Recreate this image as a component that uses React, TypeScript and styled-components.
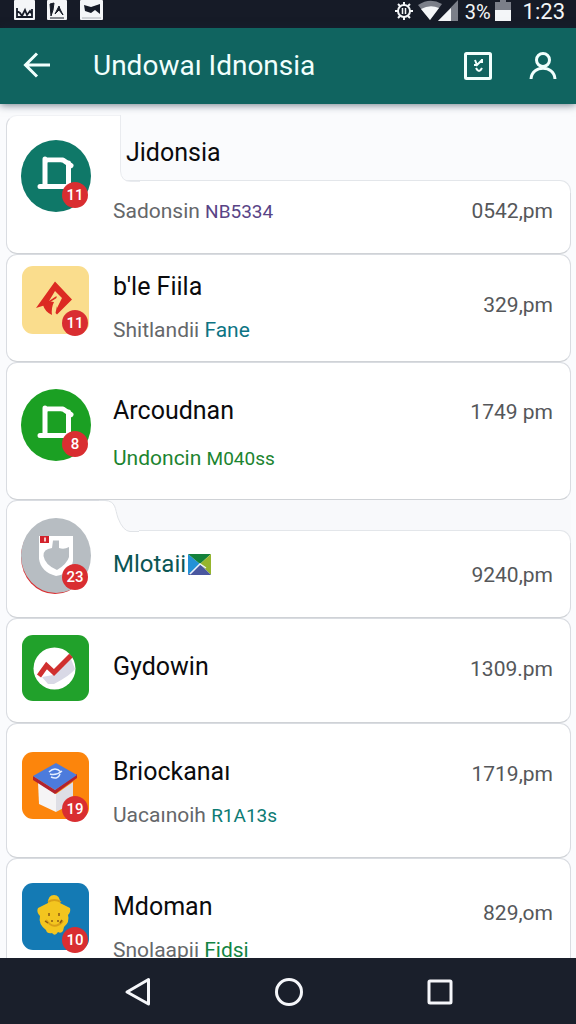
import React from "react";
import styled, { createGlobalStyle, css } from "styled-components";

const GlobalStyle = createGlobalStyle`
  * { box-sizing: border-box; }
  body {
    margin: 0;
    background: #fafbfd;
    font-family: Roboto, "Liberation Sans", sans-serif;
    color: #0b0b0d;
  }
  button { border: 0; padding: 0; background: none; color: inherit; font: inherit; cursor: pointer; }
  svg { display: block; }
`;

const Screen = styled.div`
  display: flex;
  flex-direction: column;
  height: 100vh;
`;

const StatusBar = styled.div`
  flex: none;
  display: flex;
  align-items: flex-start;
  justify-content: space-between;
  height: 28px;
  padding: 0 11px 0 14px;
  background: #161b27;
  color: #f4f6f8;
`;

const Notices = styled.div`
  display: flex;
  gap: 12px;
`;

const Signals = styled.div`
  display: flex;
  font-size: 22px;
  line-height: 24px;
`;

const Charge = styled.span`
  margin-left: 6px;
  font-size: 20px;
`;

const Clock = styled.time`
  margin-left: 10px;
`;

const AppBar = styled.header`
  position: relative;
  flex: none;
  display: flex;
  align-items: center;
  height: 76px;
  padding: 0 16px 0 20px;
  background: #106460;
  color: #f1fffd;
  box-shadow: 0 1px 8px rgba(20, 40, 60, 0.6);
`;

const BarButton = styled.button`
  display: grid;
  place-items: center;
  width: 34px;
  height: 40px;
`;

const BarTitle = styled.h1`
  flex: 1;
  margin: 0 0 0 39px;
  font-size: 28px;
  line-height: 36px;
  font-weight: 400;
`;

const BarActions = styled.div`
  display: flex;
  gap: 31px;
`;

const List = styled.ul`
  flex: 1;
  min-height: 0;
  overflow-y: auto;
  scrollbar-width: none;
  margin: 0;
  padding: 11px 5px 0 6px;
  list-style: none;
`;

type Notch = "square" | "curved";

const Row = styled.li<{ $height: number; $notch?: Notch }>`
  position: relative;
  display: flex;
  align-items: flex-start;
  min-height: ${(p) => p.$height}px;
  padding: 0 17px 0 14px;
  background: #fff;
  border: 1px solid #d9dce1;
  border-bottom-color: #cfd2d6;
  border-radius: 11px;
  ${(p) =>
    p.$notch === "square" &&
    css`
      border-top-color: #f1f2f5;
    `}
`;

const notchDepth = { square: 66, curved: 31 };

const NotchArea = styled.div<{ $kind: Notch }>`
  position: absolute;
  top: -1px;
  right: -1px;
  left: ${(p) => (p.$kind === "square" ? 113 : 120)}px;
  height: ${(p) => notchDepth[p.$kind] + 12}px;
  background: ${(p) => (p.$kind === "square" ? "#fafbfd" : "#f8f9fb")};

  &::after {
    content: "";
    position: absolute;
    right: 0;
    bottom: 0;
    left: 0;
    height: 12px;
    background: #fff;
    border: 1px solid #e3e6ea;
    border-width: 1px 1px 0 0;
    border-top-right-radius: 11px;
  }
`;

const NotchCorner = styled.svg<{ $kind: Notch }>`
  position: absolute;
  top: -1px;
  left: ${(p) => (p.$kind === "square" ? 113 : 92)}px;
`;

const Avatar = styled.div<{ $top: number }>`
  position: relative;
  flex: none;
  width: 70px;
  margin-top: ${(p) => p.$top}px;
`;

const Badge = styled.span`
  position: absolute;
  right: 3px;
  bottom: -2px;
  display: grid;
  place-items: center;
  width: 26px;
  height: 26px;
  border-radius: 13px;
  background: #d92e31;
  color: #fff;
  font-size: 15px;
  font-weight: 500;
  line-height: 26px;
`;

const RoundBadge = styled(Badge)`
  bottom: 4px;
`;

const Texts = styled.div<{ $top: number; $gap: number }>`
  position: relative;
  flex: 1;
  display: flex;
  flex-direction: column;
  gap: ${(p) => p.$gap}px;
  margin: ${(p) => p.$top}px 0 0 22px;
`;

const Name = styled.h2<{ $teal?: boolean; $indent?: boolean }>`
  display: flex;
  align-items: center;
  gap: 2px;
  margin: 0;
  padding-left: ${(p) => (p.$indent ? 13 : 0)}px;
  font-size: ${(p) => (p.$teal ? 24 : 25)}px;
  line-height: 32px;
  font-weight: 400;
  color: ${(p) => (p.$teal ? "#0b5654" : "inherit")};
`;

const Detail = styled.p<{ $color?: string }>`
  margin: 0;
  font-size: 21px;
  line-height: 28px;
  color: ${(p) => p.$color ?? "#65676a"};
`;

const Tag = styled.span<{ $color: string; $code: boolean }>`
  font-size: ${(p) => (p.$code ? 19 : 21)}px;
  color: ${(p) => p.$color};
`;

const Time = styled.time<{ $top: number }>`
  position: relative;
  margin-top: ${(p) => p.$top}px;
  font-size: 21px;
  line-height: 28px;
  color: #55575a;
`;

const NavBar = styled.nav`
  flex: none;
  display: flex;
  align-items: center;
  justify-content: center;
  gap: 111px;
  height: 66px;
  padding: 2px 0 0 2px;
  background: #1a1f2b;
  color: #f5f6fa;
`;

const NavButton = styled.button`
  display: grid;
  place-items: center;
  width: 40px;
  height: 40px;
`;

const ArchLogo = ({ color }: { color: string }) => (
  <svg width="70" height="72" viewBox="0 0 70 72" aria-hidden="true">
    <ellipse cx="35" cy="36" rx="35" ry="36" fill={color} />
    <path d="M24 19V46M19 46.500H48M24 20H42L50 25.500M47.500 23V44" fill="none" stroke="#fff" strokeWidth="5" strokeLinejoin="round" strokeLinecap="round" />
    <path d="M27 22.500H40L45 26.500V43.500H27Z" fill={color} />
  </svg>
);

const FlameLogo = () => (
  <svg width="70" height="68" viewBox="0 0 70 68" aria-hidden="true">
    <rect x="1" width="67" height="68" rx="11" fill="#fadd8d" />
    <path d="M34 15.500L51 33.500L36 48.500L34.500 47L38 30.500L24.500 39L15 42Z" fill="#dc2a22" />
    <path d="M34 25L41 32L36 42L35.500 30L28 35Z" fill="#fadd8d" />
    <path d="M22 39Q27 34 33 36Q30 42 31 49Q24 46 22 39Z" fill="#dc2a22" />
  </svg>
);

const ShieldLogo = () => (
  <svg width="70" height="76" viewBox="0 0 70 76" aria-hidden="true">
    <ellipse cx="34" cy="39" rx="34" ry="37" fill="#d92e31" />
    <ellipse cx="35" cy="37.500" rx="35" ry="37.500" fill="#b7bdc2" />
    <path d="M18 18H52V43Q50 56 35 58Q20 54 18 41Z" fill="#fff" />
    <path d="M32 22.500H38V30Q43 32 48 29V39Q46 46 36 52Q24 47 22.500 38Q22 31 31 30Z" fill="#b7bdc2" />
    <rect x="19" y="18" width="9" height="7" fill="#d3222b" />
    <path d="M24 19.500V23.500" stroke="#fff" strokeWidth="1.500" />
  </svg>
);

const ChartLogo = () => (
  <svg width="70" height="68" viewBox="0 0 70 68" aria-hidden="true">
    <rect x="1" width="67" height="66" rx="11" fill="#21a12b" />
    <circle cx="33.500" cy="33.500" r="21" fill="#fff" />
    <path d="M21 42L32 40L50 24L54 34Q50 40 33 49H27Z" fill="#d9d9e6" />
    <path d="M18 41L25.500 30.500L33 37.500L50 20.500" fill="none" stroke="#d0302f" strokeWidth="5" />
  </svg>
);

const BoxLogo = () => (
  <svg width="70" height="68" viewBox="0 0 70 68" aria-hidden="true">
    <rect x="1" width="67" height="67" rx="11" fill="#fc850c" />
    <path d="M17 30L35 42V60L18 52Z" fill="#f5f4f5" />
    <path d="M35 42L52 30V51L35 60Z" fill="#dedee5" />
    <path d="M12 24V28L34 42L56 26V22L34 38Z" fill="#b3222d" />
    <path d="M35 11L56 23L34 38L12 24Z" fill="#4c7bdc" />
    <path d="M28 20Q34 14 40 20M29 22Q35 24 41 19M30 25Q37 28 39 22" fill="none" stroke="#e4efff" strokeWidth="1.500" />
  </svg>
);

const MascotLogo = () => (
  <svg width="70" height="68" viewBox="0 0 70 68" aria-hidden="true">
    <rect x="1" width="67" height="67" rx="11" fill="#147ab4" />
    <path d="M27 20Q27 12 33 12Q39 12 39 20L49 25Q50 29 47 32Q49 39 43 44L42 48Q40 51 37 49Q34 54 31 50Q26 51 25 47Q17 41 19 33Q15 29 17 25Z" fill="#f3c51f" />
    <path d="M27 19Q33 15 40 19M25 37Q33 48 42 38" fill="none" stroke="#d89f17" strokeWidth="2" />
    <path d="M28 30v3M38 30v3M24 38l3 2M30 38h2M36 38h2M41 37l-2 3" stroke="#8a5a16" strokeWidth="1.500" fill="none" />
  </svg>
);

const MapChip = () => (
  <svg width="23" height="21" viewBox="0 0 23 21" aria-hidden="true">
    <path d="M0 0V21L12 10Z" fill="#2491d6" />
    <path d="M0 0H23L12 10Z" fill="#13813b" />
    <path d="M23 0V21L12 10Z" fill="#96b52d" />
    <path d="M0 21L12 10L23 21Z" fill="#4a579f" />
    <path d="M2 20L12 10L18 14" fill="none" stroke="#e9f2fb" strokeWidth="1.500" />
  </svg>
);

const NotchShape = ({ kind }: { kind: Notch }) => (
  <>
    <NotchArea $kind={kind} />
    {kind === "square" ? (
      <NotchCorner $kind={kind} width="20" height="68" aria-hidden="true">
        <path d="M0 56V68H20V66.500H10Q1 66 0.500 56Z" fill="#fff" />
        <path d="M0.500 0V56Q1 66.500 11 66.500H20" fill="none" stroke="#e9ebef" />
      </NotchCorner>
    ) : (
      <NotchCorner $kind={kind} width="40" height="33" aria-hidden="true">
        <path d="M6 0H40V32H31Q25 31 20 20C17 9 16 1 6 0Z" fill="#f8f9fb" />
        <path d="M0 0.500H6C17 1 16 9 19 18Q24 31 31 31.500H40" fill="none" stroke="#e0e3e7" />
      </NotchCorner>
    )}
  </>
);

interface Entry {
  name: string;
  detail?: string;
  detailColor?: string;
  tag?: string;
  tagColor?: string;
  time: string;
  badge?: string;
  logo: React.ReactNode;
  round?: boolean;
  notch?: Notch;
  chip?: boolean;
  height: number;
  logoTop: number;
  textTop: number;
  gap: number;
  timeTop: number;
}

const entries: Entry[] = [
  { name: "Jidonsia", detail: "Sadonsin", tag: "NB5334", tagColor: "#594486", time: "0542,pm", badge: "11", logo: <ArchLogo color="#0f7868" />, round: true, notch: "square", height: 139, logoTop: 24, textTop: 21, gap: 28, timeTop: 81 },
  { name: "b'le Fiila", detail: "Shitlandii", tag: "Fane", tagColor: "#0d7484", time: "329,pm", badge: "11", logo: <FlameLogo />, height: 108, logoTop: 11, textTop: 16, gap: 13, timeTop: 36 },
  { name: "Arcoudnan", detail: "Undoncin", detailColor: "#1c8430", tag: "M040ss", tagColor: "#1c8430", time: "1749 pm", badge: "8", logo: <ArchLogo color="#1ba023" />, round: true, height: 138, logoTop: 26, textTop: 32, gap: 17, timeTop: 35 },
  { name: "Mlotaii", chip: true, time: "9240,pm", badge: "23", logo: <ShieldLogo />, round: true, notch: "curved", height: 118, logoTop: 17, textTop: 47, gap: 13, timeTop: 60 },
  { name: "Gydowin", time: "1309.pm", logo: <ChartLogo />, height: 105, logoTop: 16, textTop: 32, gap: 13, timeTop: 36 },
  { name: "Briockanaı", detail: "Uacaınoih", tag: "R1A13s", tagColor: "#0c7b74", time: "1719,pm", badge: "19", logo: <BoxLogo />, height: 135, logoTop: 28, textTop: 32, gap: 13, timeTop: 36 },
  { name: "Mdoman", detail: "Snolaapii", tag: "Fidsi", tagColor: "#128443", time: "829,om", badge: "10", logo: <MascotLogo />, height: 135, logoTop: 24, textTop: 32, gap: 13, timeTop: 40 },
];

const EntryRow = ({ entry }: { entry: Entry }) => {
  const Count = entry.round ? RoundBadge : Badge;
  return (
    <Row $height={entry.height} $notch={entry.notch}>
      {entry.notch && <NotchShape kind={entry.notch} />}
      <Avatar $top={entry.logoTop}>
        {entry.logo}
        {entry.badge && <Count>{entry.badge}</Count>}
      </Avatar>
      <Texts $top={entry.textTop} $gap={entry.gap}>
        <Name $teal={entry.chip} $indent={entry.notch === "square"}>
          {entry.name}
          {entry.chip && <MapChip />}
        </Name>
        {entry.detail && (
          <Detail $color={entry.detailColor}>
            {entry.detail}{" "}
            <Tag $color={entry.tagColor ?? "inherit"} $code={/\d/.test(entry.tag ?? "")}>
              {entry.tag}
            </Tag>
          </Detail>
        )}
      </Texts>
      <Time $top={entry.timeTop}>{entry.time}</Time>
    </Row>
  );
};

export default function App() {
  return (
    <Screen>
      <GlobalStyle />
      <StatusBar>
        <Notices>
          <svg width="21" height="21" viewBox="0 0 21 21" aria-hidden="true">
            <rect width="21" height="20" rx="1" fill="#f4f6f8" />
            <path d="M3 8V17H18V9M3 11L6 13L8 16L11 10L13 15L16 11L18 14" fill="none" stroke="#161b27" strokeWidth="1.800" />
          </svg>
          <svg width="21" height="21" viewBox="0 0 21 21" aria-hidden="true">
            <rect width="20" height="20" rx="1" fill="#f4f6f8" />
            <path d="M3 4L7 3L6 10L4 16ZM8 14L12 6L13 9L16 15L12 10Z" fill="#161b27" stroke="#161b27" />
            <path d="M3 18H17" stroke="#161b27" />
          </svg>
          <svg width="23" height="21" viewBox="0 0 23 21" aria-hidden="true">
            <rect width="23" height="20" rx="1" fill="#f4f6f8" />
            <path d="M4 5L11 7L20 4V14L15 10L11 13L5 11Z" fill="#161b27" />
            <path d="M2 18H21" stroke="#aeb2b8" />
          </svg>
        </Notices>
        <Signals>
          <svg width="22" height="22" viewBox="0 0 22 22" aria-hidden="true">
            <circle cx="9" cy="11" r="6" fill="none" stroke="#f4f6f8" strokeWidth="2" />
            <path d="M3 4L5 6M15 4L13 6M3 18L5 16M15 18L13 16M0 11H3M15 11H18M9 2V5M9 17V20" stroke="#f4f6f8" strokeWidth="2" />
            <path d="M7.500 8V14M10.500 8V14" stroke="#f4f6f8" strokeWidth="1.500" />
          </svg>
          <svg width="42" height="22" viewBox="0 0 42 22" aria-hidden="true">
            <path d="M1 5Q13 -3 25 4L13 20Z" fill="#7b7f89" />
            <path d="M4 9Q13 4 22 8L13 20Z" fill="#f4f6f8" />
            <path d="M41 0V21H21Z" fill="#7b7f89" />
            <path d="M34 8V21H21Z" fill="#f4f6f8" />
          </svg>
          <Charge>3%</Charge>
          <svg width="22" height="22" viewBox="0 0 22 22" aria-hidden="true">
            <path d="M9 0H15V2H20V10H4V2H9Z" fill="#7b7f89" />
            <path d="M4 10H20V21H4Z" fill="#f4f6f8" />
          </svg>
          <Clock>1:23</Clock>
        </Signals>
      </StatusBar>
      <AppBar>
        <BarButton aria-label="Back">
          <svg width="34" height="32" viewBox="0 0 34 32" fill="none" stroke="currentColor" strokeWidth="3">
            <path d="M30 15H6M17 3.500L5.500 15L17 26.500" />
          </svg>
        </BarButton>
        <BarTitle>Undowaı Idnonsia</BarTitle>
        <BarActions>
          <BarButton aria-label="Open note">
            <svg width="28" height="28" viewBox="0 0 28 28" fill="none" stroke="currentColor">
              <rect x="1.500" y="1.500" width="25" height="25" rx="1" strokeWidth="3" />
              <path d="M11 8L13 13L18 8M18 7V11M11 12V14M12 16Q15 22 18 16" strokeWidth="2" />
            </svg>
          </BarButton>
          <BarButton aria-label="Profile">
            <svg width="30" height="30" viewBox="0 0 30 30" fill="none" stroke="currentColor" strokeWidth="3">
              <circle cx="15" cy="9" r="6.500" />
              <path d="M3 28C4 13.500 26 13.500 27 28" />
            </svg>
          </BarButton>
        </BarActions>
      </AppBar>
      <List>
        {entries.map((entry) => (
          <EntryRow key={entry.name} entry={entry} />
        ))}
      </List>
      <NavBar>
        <NavButton aria-label="Back">
          <svg width="28" height="30" viewBox="0 0 28 30" fill="none" stroke="currentColor" strokeWidth="3" strokeLinejoin="round">
            <path d="M24.500 2.500V27L3 15Z" />
          </svg>
        </NavButton>
        <NavButton aria-label="Home">
          <svg width="30" height="30" viewBox="0 0 30 30" fill="none" stroke="currentColor" strokeWidth="3">
            <circle cx="15" cy="15" r="12.500" />
          </svg>
        </NavButton>
        <NavButton aria-label="Recent apps">
          <svg width="26" height="26" viewBox="0 0 26 26" fill="none" stroke="currentColor" strokeWidth="3">
            <rect x="2" y="2" width="22" height="22" rx="1" />
          </svg>
        </NavButton>
      </NavBar>
    </Screen>
  );
}
